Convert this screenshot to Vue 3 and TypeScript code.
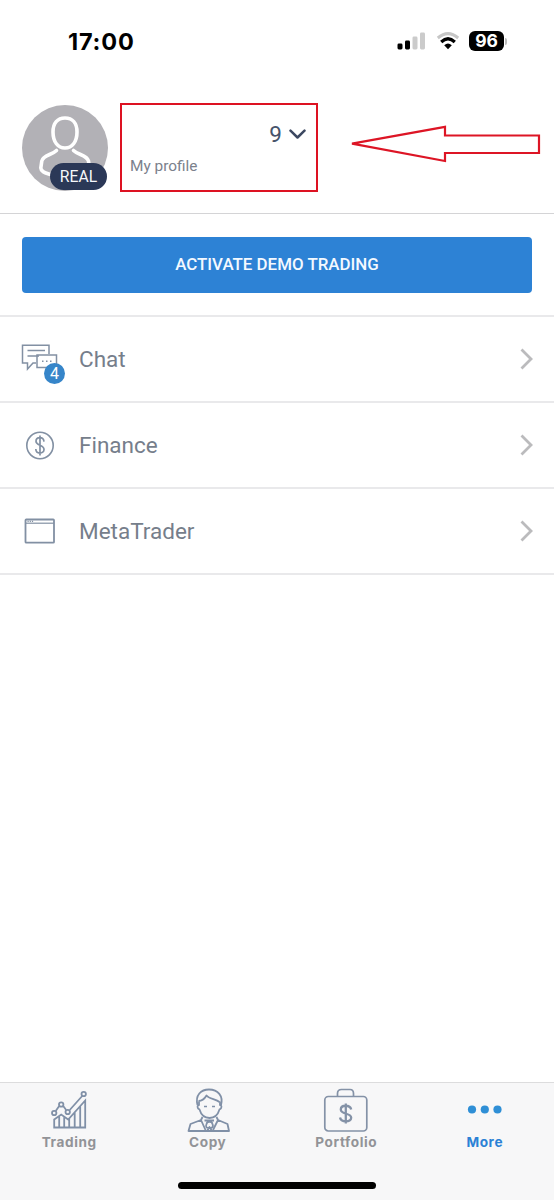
<script setup lang="ts">
interface MenuItem {
  id: 'chat' | 'finance' | 'meta'
  label: string
  badge?: number
}

interface Tab {
  id: 'trading' | 'copy' | 'portfolio' | 'more'
  label: string
  active?: boolean
}

const menu: MenuItem[] = [
  { id: 'chat', label: 'Chat', badge: 4 },
  { id: 'finance', label: 'Finance' },
  { id: 'meta', label: 'MetaTrader' },
]

const tabs: Tab[] = [
  { id: 'trading', label: 'Trading' },
  { id: 'copy', label: 'Copy' },
  { id: 'portfolio', label: 'Portfolio' },
  { id: 'more', label: 'More', active: true },
]
</script>

<template>
  <div class="screen">
    <header class="status">
      <span class="clock">17:00</span>
      <div class="indicators">
        <svg class="signal" width="29" height="18" viewBox="0 0 29 18">
          <rect x="0.5" y="11.5" width="5" height="6" rx="1.4" fill="#000" />
          <rect x="8" y="8.5" width="5" height="9" rx="1.4" fill="#000" />
          <rect x="15.5" y="4.5" width="5" height="13" rx="1.4" fill="#cbcbcb" />
          <rect x="23" y="0.5" width="5" height="17" rx="1.4" fill="#cbcbcb" />
        </svg>
        <svg class="wifi" width="24" height="18" viewBox="0 0 24 18">
          <path d="M1.8 6 Q12 -2.8 22.2 6" fill="none" stroke="#c6c6c6" stroke-width="3" />
          <path d="M5.2 10 Q12 3.6 18.8 10" fill="none" stroke="#000" stroke-width="3.2" />
          <path d="M8.2 13.3 Q12 9.8 15.8 13.3 L12 17.3Z" fill="#000" />
        </svg>
        <span class="battery">96</span>
        <span class="battery-tip"></span>
      </div>
    </header>

    <section class="profile">
      <div class="avatar">
        <svg width="86" height="86" viewBox="0 0 86 86">
          <circle cx="43" cy="43" r="43" fill="#b2b1b6" />
          <g fill="none" stroke="#fff" stroke-width="3.6" stroke-linecap="round" stroke-linejoin="round">
            <path d="M43 13 C50.5 13 55 18 55 27 C55 37 50 43 43 43 C36 43 31 37 31 27 C31 18 35.500 13 43 13Z" />
            <path d="M34.500 45.500 C30 50 21 50 19.800 56 L18.800 63 C19 67.500 25 68 32 71" />
            <path d="M51.500 45.500 C56 50 65 50 66.500 56 L67.300 62" />
          </g>
        </svg>
        <span class="account-type">REAL</span>
      </div>
      <div class="profile-box">
        <div class="account">
          <span>9</span>
          <svg width="17" height="11" viewBox="0 0 17 11">
            <path d="M1.500 1.700 L8.500 8.500 L15.500 1.700" fill="none" stroke="#3c4861" stroke-width="2.500" stroke-linecap="round" stroke-linejoin="round" />
          </svg>
        </div>
        <div class="profile-link">My profile</div>
      </div>
      <svg class="pointer" width="192" height="38" viewBox="0 0 192 38">
        <path d="M2 18.700 L95 1.800 V10.500 H189 V28 H95 V36 Z" fill="none" stroke="#dd1525" stroke-width="2.200" />
      </svg>
    </section>

    <section class="action">
      <button class="activate" type="button">ACTIVATE DEMO TRADING</button>
    </section>

    <main class="menu">
      <div v-for="item in menu" :key="item.id" class="row">
        <div class="row-icon">
          <svg v-if="item.id === 'chat'" width="38" height="30" viewBox="0 0 38 30" fill="none" stroke="#8290a3" stroke-width="1.5">
            <path d="M15 19 H12 L6.500 25 V19 H1.500 V1.200 H28 V10" />
            <path d="M6.500 6.500 H24 M6.500 12 H18" />
            <path d="M16 11 H35.500 V23.500 H16Z" />
            <path d="M21 17.300 H31" stroke-dasharray="1.500 2.500" />
          </svg>
          <svg v-else-if="item.id === 'finance'" width="38" height="30" viewBox="0 0 38 30" fill="none" stroke="#8290a3">
            <circle cx="19" cy="15.500" r="13.200" stroke-width="1.600" />
            <path d="M23 11.700 C22.500 6.200 15 6.700 15 11.300 C15 16 23 14.500 23 19.500 C23 24.200 15 24.500 14.800 19 M19 5.500 V25.500" stroke-width="1.700" />
          </svg>
          <svg v-else width="38" height="30" viewBox="0 0 38 30" fill="none" stroke="#8290a3" stroke-width="1.800">
            <rect x="4.500" y="3.500" width="28.500" height="23.200" rx="0.800" />
            <path d="M5 7.200 H33" stroke-width="1.200" />
            <path d="M6.500 5.400 H13" stroke-width="1.200" stroke-dasharray="1.200 1" />
          </svg>
          <span v-if="item.badge" class="badge">{{ item.badge }}</span>
        </div>
        <span class="row-label">{{ item.label }}</span>
        <svg class="chevron" width="13" height="22" viewBox="0 0 13 22">
          <path d="M1.500 1.500 L11 11 L1.500 20.500" fill="none" stroke="#bbbbbd" stroke-width="2.800" />
        </svg>
      </div>
    </main>

    <nav class="tabbar">
      <div v-for="tab in tabs" :key="tab.id" class="tab" :class="[tab.id, { active: tab.active }]">
        <svg v-if="tab.id === 'trading'" width="44" height="44" viewBox="-1.2 0.5 44 44" fill="none" stroke="#8090a7" stroke-width="1.800">
          <path d="M7.500 23.500 L11 18.500 M15 18.500 L18 22.500 M21.500 22.500 L34 8.500" />
          <circle cx="6" cy="25.500" r="2.200" />
          <circle cx="13" cy="17" r="2.200" />
          <circle cx="19.500" cy="24.500" r="2.200" />
          <circle cx="35.500" cy="6.500" r="2.200" />
          <path d="M6 40 V32 L13 27 L20 32 L37 13 V40Z M11 40 V29 M16 40 V29.500 M21 40 V31 M26.500 40 V25 M32 40 V19" />
        </svg>
        <svg v-else-if="tab.id === 'copy'" width="44" height="44" viewBox="-1 0 44 44" fill="none" stroke="#8090a7" stroke-width="1.800" stroke-linejoin="round">
          <path d="M10.500 17 C8 7 14 1.500 22 1.500 C31 1.500 36.500 8 34 17 M11.500 13 C16 13 18 10 19.500 7.500 C22 11 29 11 32.500 14" />
          <path d="M12 13.500 V17 C10 17 10 21 12.500 21.500 C14 26.500 17.500 30 22.500 30 C27.500 30 31 26.500 32.500 21.500 C35 21 35 17 33 17 V13.500" />
          <path d="M17 18.500 H20 M25 18.500 H28" stroke-width="1.400" />
          <path d="M15.500 29 L14 32 L3.500 36 L1.500 43 H42 L40.500 36 L31 32 L29.500 29 M14 32 L18.500 42 M31 32 L26 42" />
          <path d="M17.500 32.500 H27 M19.500 36 C20 33 25 33 25.500 36 C27 40 24 40 22.500 40 C20 40 18 39.500 19.500 36 M20 43 L22.500 39 L25 43" />
        </svg>
        <svg v-else-if="tab.id === 'portfolio'" width="46" height="44" viewBox="0 0 46 44" fill="none" stroke="#8492a7" stroke-width="1.700">
          <rect x="1.800" y="8.500" width="42" height="34.500" rx="3.500" />
          <path d="M14.500 8.500 V5.500 Q14.500 1.500 18.500 1.500 H27 Q30.500 1.500 30.500 5.500 V8.500" />
          <path d="M28.200 21.500 C27 16.500 17.800 16.500 17.800 21.600 C17.800 27 28.200 24.500 28.200 29.700 C28.200 34.700 18 34.700 17 29.500 M22.800 15.500 V35.500" stroke-width="2.300" />
        </svg>
        <svg v-else width="44" height="44" viewBox="0 0 44 44" fill="#2f8fd6">
          <circle cx="9" cy="21.500" r="4.100" />
          <circle cx="21.800" cy="21.500" r="4.100" />
          <circle cx="34.500" cy="21.500" r="4.100" />
        </svg>
        <span class="tab-label">{{ tab.label }}</span>
      </div>
      <span class="home-indicator"></span>
    </nav>
  </div>
</template>

<style>
body {
  margin: 0;
  background: #fff;
}
</style>

<style scoped>
.screen {
  width: 554px;
  height: 1200px;
  display: flex;
  flex-direction: column;
  box-sizing: border-box;
  overflow: hidden;
  background: #fff;
  font-family: Roboto, "Liberation Sans", sans-serif;
}
.screen *,
.screen *::before {
  box-sizing: border-box;
}
svg {
  display: block;
  flex: none;
}
.status {
  height: 82px;
  flex: none;
  display: flex;
  justify-content: space-between;
  padding: 0 47px 0 68px;
}
.clock {
  padding-top: 28px;
  font: 700 23.5px/28px Inter, sans-serif;
  letter-spacing: 0.8px;
  color: #000;
}
.indicators {
  display: flex;
  align-items: center;
  height: 82px;
}
.wifi {
  margin-left: 10px;
}
.battery {
  width: 35px;
  height: 20px;
  margin-left: 9px;
  border-radius: 6px;
  background: #000;
  color: #fff;
  text-align: center;
  font: 700 17.5px/20px Inter, sans-serif;
}
.battery-tip {
  width: 2px;
  height: 7px;
  margin-left: 1px;
  border-radius: 0 2px 2px 0;
  background: #bbb;
}
.profile {
  height: 132px;
  flex: none;
  display: flex;
  align-items: flex-start;
  padding: 21px 0 0 22px;
  border-bottom: 1px solid #d4d4d6;
}
.avatar {
  position: relative;
  width: 86px;
  height: 86px;
  margin-top: 2px;
}
.account-type {
  position: absolute;
  left: 28px;
  top: 58px;
  width: 57px;
  height: 27px;
  border-radius: 14px;
  background: #2b3857;
  color: #f6f7fa;
  text-align: center;
  font-size: 15.7px;
  line-height: 28px;
}
.profile-box {
  width: 198px;
  height: 89px;
  margin-left: 12px;
  padding: 15px 10px 0 8px;
  border: 2px solid #dd1222;
}
.account {
  display: flex;
  align-items: center;
  justify-content: flex-end;
  gap: 7px;
  height: 28px;
  color: #46536b;
  font-size: 22.5px;
}
.profile-link {
  margin-top: 8px;
  color: #7b818c;
  font-size: 15.4px;
  line-height: 20px;
}
.pointer {
  margin: 22px 0 0 32px;
}
.action {
  height: 103px;
  flex: none;
  padding: 23px 22px 0;
  border-bottom: 2px solid #e9e9eb;
}
.activate {
  display: block;
  width: 510px;
  height: 56px;
  padding: 0 0 2px;
  border: 0;
  border-radius: 4px;
  background: #2d82d5;
  color: #f4f9ff;
  font: 500 16.9px/54px Roboto, sans-serif;
}
.menu {
  flex: 1;
}
.row {
  height: 86px;
  display: flex;
  align-items: center;
  padding: 0 21px;
  border-bottom: 2px solid #e9e9eb;
}
.row-icon {
  position: relative;
  width: 38px;
  flex: none;
}
.badge {
  position: absolute;
  left: 23px;
  top: 19px;
  width: 21px;
  height: 21px;
  border-radius: 50%;
  background: #3685c9;
  color: #fff;
  text-align: center;
  font-size: 16px;
  line-height: 22px;
}
.row-label {
  margin-left: 20px;
  padding-bottom: 1px;
  color: #767e8b;
  font-size: 22.5px;
}
.chevron {
  margin-left: auto;
}
.tabbar {
  height: 118px;
  flex: none;
  position: relative;
  display: flex;
  background: #f7f7f8;
  border-top: 1px solid #dcdcdd;
}
.tab {
  width: 138.5px;
  padding-top: 5px;
  display: flex;
  flex-direction: column;
  align-items: center;
}
.tab-label {
  margin-top: 1px;
  color: #929397;
  font: 700 13.6px/18px Inter, sans-serif;
  letter-spacing: 0.6px;
}
.active .tab-label {
  color: #2b81d5;
}
.home-indicator {
  position: absolute;
  left: 178px;
  bottom: 11px;
  width: 198px;
  height: 7px;
  border-radius: 4px;
  background: #000;
}
</style>
